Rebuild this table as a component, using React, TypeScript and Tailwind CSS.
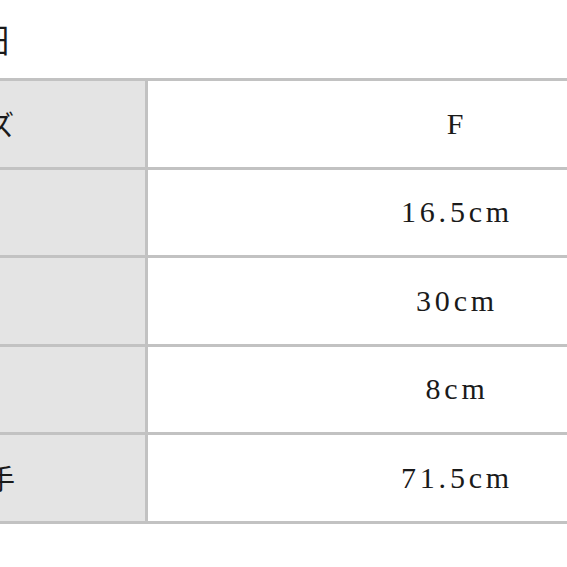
const rows = [
  { label: "サイズ", value: "F" },
  { label: "マチ", value: "16.5cm" },
  { label: "横幅", value: "30cm" },
  { label: "高さ", value: "8cm" },
  { label: "持ち手", value: "71.5cm" },
];

export default function App() {
  return (
    <div className="relative h-[567px] w-[567px] overflow-hidden bg-white text-[#1a1a1a]">
      {/* heading, cropped at the left edge */}
      <div className="flex h-[78px] items-center">
        <h2 className="-ml-[127px] whitespace-nowrap font-['Noto_Sans_CJK_JP',sans-serif] text-[34px] leading-none font-normal">
          商品詳細
        </h2>
      </div>

      <div className="-ml-[100px] w-[862px] border-t-[3px] border-[#c2c2c2]">
        {rows.map((row) => (
          <div
            key={row.label}
            className="grid h-[88.5px] grid-cols-[248px_614px] border-b-[3px] border-[#c2c2c2]"
          >
            <div className="flex items-center border-r-[3px] border-[#c2c2c2] bg-[#e4e4e4] pl-[31px] font-['Noto_Sans_CJK_JP',sans-serif] text-[28px] leading-none whitespace-nowrap">
              {row.label}
            </div>
            <div className="flex items-center justify-center pl-[4px] font-['Liberation_Serif',serif] text-[30px] leading-none tracking-[3.8px]">
              {row.value}
            </div>
          </div>
        ))}
      </div>
    </div>
  );
}
